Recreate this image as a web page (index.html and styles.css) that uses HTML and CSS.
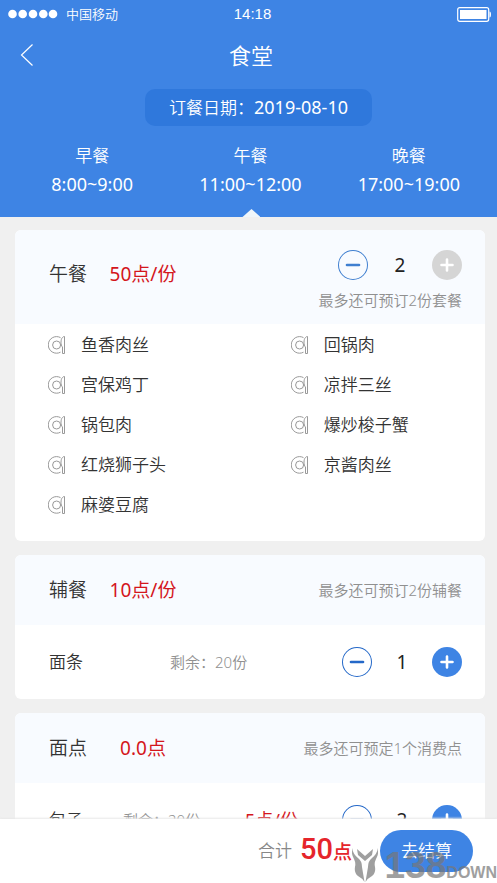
FILE: index.html
```html
<!DOCTYPE html>
<html lang="zh-CN">
<head>
<meta charset="utf-8">
<meta name="viewport" content="width=device-width, initial-scale=1">
<title>食堂</title>
<link rel="stylesheet" href="styles.css">
</head>
<body>
<svg class="sprite" aria-hidden="true">
  <symbol id="plate" viewBox="0 0 18 20">
    <g fill="none" stroke="currentColor" stroke-width="1">
      <path d="M12.500 2.600A8.300 8.300 0 1 0 12.500 17.200"/>
      <circle cx="8.600" cy="10" r="4"/>
      <path d="M16.500 1.500v17h-2v-6.500c-2-1.500-2-8 0-9.500c.5-.7 1.200-1 2-1z"/>
    </g>
  </symbol>
  <symbol id="minus" viewBox="0 0 30 30"><path d="M9 15h12" stroke="currentColor" stroke-width="2.600" stroke-linecap="round"/></symbol>
  <symbol id="plus" viewBox="0 0 30 30"><path d="M9.500 15h11M15 9.500v11" stroke="currentColor" stroke-width="2.600" stroke-linecap="round"/></symbol>
</svg>
<div class="app">
  <header class="header">
    <div class="status">
      <div class="carrier">
        <svg class="signal" viewBox="0 0 50 10" aria-hidden="true"><g fill="#fff"><circle cx="4.500" cy="5" r="4.300"/><circle cx="14.700" cy="5" r="4.300"/><circle cx="25" cy="5" r="4.300"/><circle cx="35.300" cy="5" r="4.300"/><circle cx="45" cy="5" r="4.300"/></g></svg>
        <span>中国移动</span>
      </div>
      <span class="clock">14:18</span>
      <svg class="battery" viewBox="0 0 34 15" aria-hidden="true"><rect x=".7" y=".7" width="31" height="13.600" rx="2" fill="none" stroke="#fff" stroke-width="1.200"/><rect x="3" y="3" width="26.500" height="9" fill="#fff"/><path d="M32.500 4.500q1.500 0 1.500 3t-1.500 3z" fill="#fff"/></svg>
    </div>
    <div class="nav">
      <button class="back" type="button" aria-label="返回"><svg viewBox="0 0 14 24"><path d="M12.500 1.500L1.500 12l11 10.500" fill="none" stroke="#fff" stroke-width="1.200"/></svg></button>
      <h1>食堂</h1>
    </div>
    <button class="date" type="button">订餐日期：<span>2019-08-10</span></button>
    <nav class="tabs">
      <a href="#breakfast">早餐<span>8:00~9:00</span></a>
      <a class="active" href="#lunch" aria-current="page">午餐<span>11:00~12:00</span></a>
      <a href="#dinner">晚餐<span>17:00~19:00</span></a>
    </nav>
  </header>

  <main class="content">
    <section class="card" id="lunch">
      <div class="card-head card-head-tall">
        <h2>午餐</h2><span class="price">50点/份</span>
        <div class="order">
          <div class="stepper stepper-light">
            <button class="minus" type="button" aria-label="减少"><svg><use href="#minus"/></svg></button>
            <output>2</output>
            <button class="plus" type="button" aria-label="增加" disabled><svg><use href="#plus"/></svg></button>
          </div>
          <p class="hint">最多还可预订2份套餐</p>
        </div>
      </div>
      <ul class="dishes">
        <li><svg><use href="#plate"/></svg>鱼香肉丝</li>
        <li><svg><use href="#plate"/></svg>回锅肉</li>
        <li><svg><use href="#plate"/></svg>宫保鸡丁</li>
        <li><svg><use href="#plate"/></svg>凉拌三丝</li>
        <li><svg><use href="#plate"/></svg>锅包肉</li>
        <li><svg><use href="#plate"/></svg>爆炒梭子蟹</li>
        <li><svg><use href="#plate"/></svg>红烧狮子头</li>
        <li><svg><use href="#plate"/></svg>京酱肉丝</li>
        <li><svg><use href="#plate"/></svg>麻婆豆腐</li>
      </ul>
    </section>

    <section class="card">
      <div class="card-head">
        <h2>辅餐</h2><span class="price">10点/份</span>
        <p class="hint">最多还可预订2份辅餐</p>
      </div>
      <div class="item">
        <h3>面条</h3><span class="left">剩余：20份</span>
        <div class="stepper">
          <button class="minus" type="button" aria-label="减少"><svg><use href="#minus"/></svg></button>
          <output>1</output>
          <button class="plus" type="button" aria-label="增加"><svg><use href="#plus"/></svg></button>
        </div>
      </div>
    </section>

    <section class="card">
      <div class="card-head">
        <h2>面点</h2><span class="price">0.0点</span>
        <p class="hint">最多还可预定1个消费点</p>
      </div>
      <div class="item item-priced">
        <h3>包子</h3><span class="left">剩余：20份</span><span class="item-price">5点/份</span>
        <div class="stepper">
          <button class="minus" type="button" aria-label="减少"><svg><use href="#minus"/></svg></button>
          <output>2</output>
          <button class="plus" type="button" aria-label="增加"><svg><use href="#plus"/></svg></button>
        </div>
      </div>
    </section>
  </main>

  <footer class="checkout">
    <span class="total-label">合计</span>
    <span class="total">50<small>点</small></span>
    <button class="pay" type="button">去结算</button>
    <div class="mark">
      <svg viewBox="0 0 26 36" aria-hidden="true"><path d="M0 1Q1 7 6 11Q10 14 10 20L12.500 35Q10 31 6 29Q2 26 3 20Q4 16 2 12Q-1 7 0 1ZM26 1Q25 7 20 11Q16 14 16 20L13.500 35Q16 31 20 29Q24 26 23 20Q22 16 24 12Q27 7 26 1ZM5 2L13 9L21 2L20 8L13 14L6 8Z" fill="currentColor"/></svg>
      <span class="mark-number">138</span><span class="mark-word">DOWN</span>
    </div>
  </footer>
</div>
</body>
</html>
```
FILE: styles.css
```css
* { box-sizing: border-box; }

body {
  margin: 0;
  font-family: "Noto Sans", "Noto Sans CJK SC", sans-serif;
  font-size: 17px;
  font-weight: 350;
  line-height: 24px;
  color: #333;
  background: #f0f0f0;
}

h1, h2, h3, p, ul { margin: 0; padding: 0; font-weight: inherit; }
button { border: 0; padding: 0; font: inherit; color: inherit; background: none; }
a { color: inherit; text-decoration: none; }
svg { display: block; }
.sprite { position: absolute; width: 0; height: 0; }

.app { display: flex; flex-direction: column; height: 100vh; }

/* Header */
.header { flex: none; color: #fff; background: #3e84e4; }

.status {
  display: grid;
  grid-template-columns: 1fr auto 1fr;
  align-items: center;
  height: 28px;
  padding: 0 6px 0 8px;
  font-size: 13px;
}
.carrier { display: flex; align-items: center; gap: 8px; }
.signal { width: 50px; height: 10px; }
.clock { margin-left: 6px; font-family: "Liberation Sans", sans-serif; font-size: 15px; }
.battery { width: 34px; height: 15px; justify-self: end; }

.nav {
  display: grid;
  grid-template-columns: 40px 1fr 40px;
  align-items: center;
  height: 53px;
  padding: 0 2px 0 7px;
}
.back { display: flex; justify-content: center; align-items: center; height: 40px; }
.back svg { width: 14px; height: 24px; }
h1 { font-size: 22px; text-align: center; }

.date {
  display: block;
  min-width: 227px;
  height: 37px;
  margin: 8px auto 0;
  padding: 0 20px;
  position: relative;
  left: 10px;
  border-radius: 10px;
  background: #2f78dc;
  white-space: nowrap;
}
.date span { font-size: 18px; font-weight: 400; }

.tabs {
  display: grid;
  grid-template-columns: repeat(3, 1fr);
  height: 91px;
  padding: 15px 9px 0 13px;
  text-align: center;
}
.tabs a { position: relative; line-height: 29px; }
.tabs span { display: block; font-size: 18px; font-weight: 400; }
.active::after {
  content: "";
  position: absolute;
  bottom: 0;
  left: 50%;
  width: 18px;
  height: 8px;
  margin-left: -8px;
  background: #f0f6fa;
  clip-path: polygon(50% 0, 100% 100%, 0 100%);
}

/* Cards */
.content {
  flex: 1;
  min-height: 0;
  display: flex;
  flex-direction: column;
  gap: 14px;
  padding: 13px 12px 13px 15px;
  overflow-y: auto;
  scrollbar-width: none;
}
.card { flex: none; border-radius: 6px; background: #fff; overflow: hidden; }

.card-head {
  display: flex;
  align-items: center;
  height: 70px;
  padding: 0 23px 0 34px;
  background: #f8fbff;
}
.card-head-tall { height: 94px; align-items: stretch; }
.card-head-tall h2, .card-head-tall .price { line-height: 88px; }
h2 { font-size: 19px; }
.price { width: 68px; margin-left: 22px; font-size: 19px; font-weight: 400; text-align: center; white-space: nowrap; color: #d4161c; }
.hint { margin-left: auto; font-size: 15px; color: #909090; }
.order { margin-left: auto; padding-top: 20px; }
.order .hint { margin-top: 8px; }

.stepper { display: flex; justify-content: space-between; align-items: center; width: 120px; color: #222; }
.stepper output { font-size: 19px; font-weight: 400; }
.stepper button { width: 30px; height: 30px; border-radius: 50%; }
.stepper svg { width: 30px; height: 30px; }
.stepper .minus { color: #2468c8; box-shadow: inset 0 0 0 1px #2468c8; }
.stepper .plus { color: #fff; background: #3e84e4; }
.stepper .plus:disabled { background: #d5d5d5; }
.stepper-light { width: 124px; margin-left: auto; }
.stepper-light .minus { color: #3f7fd0; box-shadow: inset 0 0 0 1px #3f7fd0; }

.dishes {
  display: grid;
  grid-template-columns: 5fr 4fr;
  grid-auto-rows: 39px;
  row-gap: 1px;
  padding: 1px 0 17px 33px;
  list-style: none;
}
.dishes li { display: flex; align-items: center; gap: 15px; }
.dishes svg { width: 18px; height: 20px; color: #999; }

.item {
  display: grid;
  grid-template-columns: 121px 1fr auto;
  align-items: center;
  height: 74px;
  padding: 0 23px 0 34px;
}
.item-priced { grid-template-columns: 74px 122px 1fr auto; }
h3 { font-size: 17px; }
.left { font-size: 15px; color: #909090; }
.item-price { font-size: 18px; font-weight: 400; color: #d4161c; }

/* Checkout bar */
.checkout {
  flex: none;
  position: relative;
  display: flex;
  justify-content: flex-end;
  align-items: center;
  height: 64px;
  padding-right: 24px;
  background: #fff;
  box-shadow: 0 -1px 2px #e8e8e8;
}
.total-label { margin-right: 8px; color: #888; }
.total { display: flex; align-items: baseline; margin-right: 28px; font-family: Roboto, "Noto Sans CJK SC", sans-serif; font-size: 29px; font-weight: 500; color: #e5252b; }
.total small { font-size: 19px; }
.pay { width: 93px; height: 42px; border-radius: 21px; color: #fff; background: #3e84e4; }

.mark {
  position: absolute;
  right: 0;
  bottom: 0;
  display: flex;
  align-items: flex-end;
  font-family: "Liberation Sans", sans-serif;
  font-weight: 700;
  color: #777;
  opacity: .7;
  pointer-events: none;
}
.mark svg { width: 26px; height: 36px; margin-right: 7px; }
.mark-number { font-size: 37px; line-height: 34px; }
.mark-word { font-size: 16px; line-height: 20px; }
```
